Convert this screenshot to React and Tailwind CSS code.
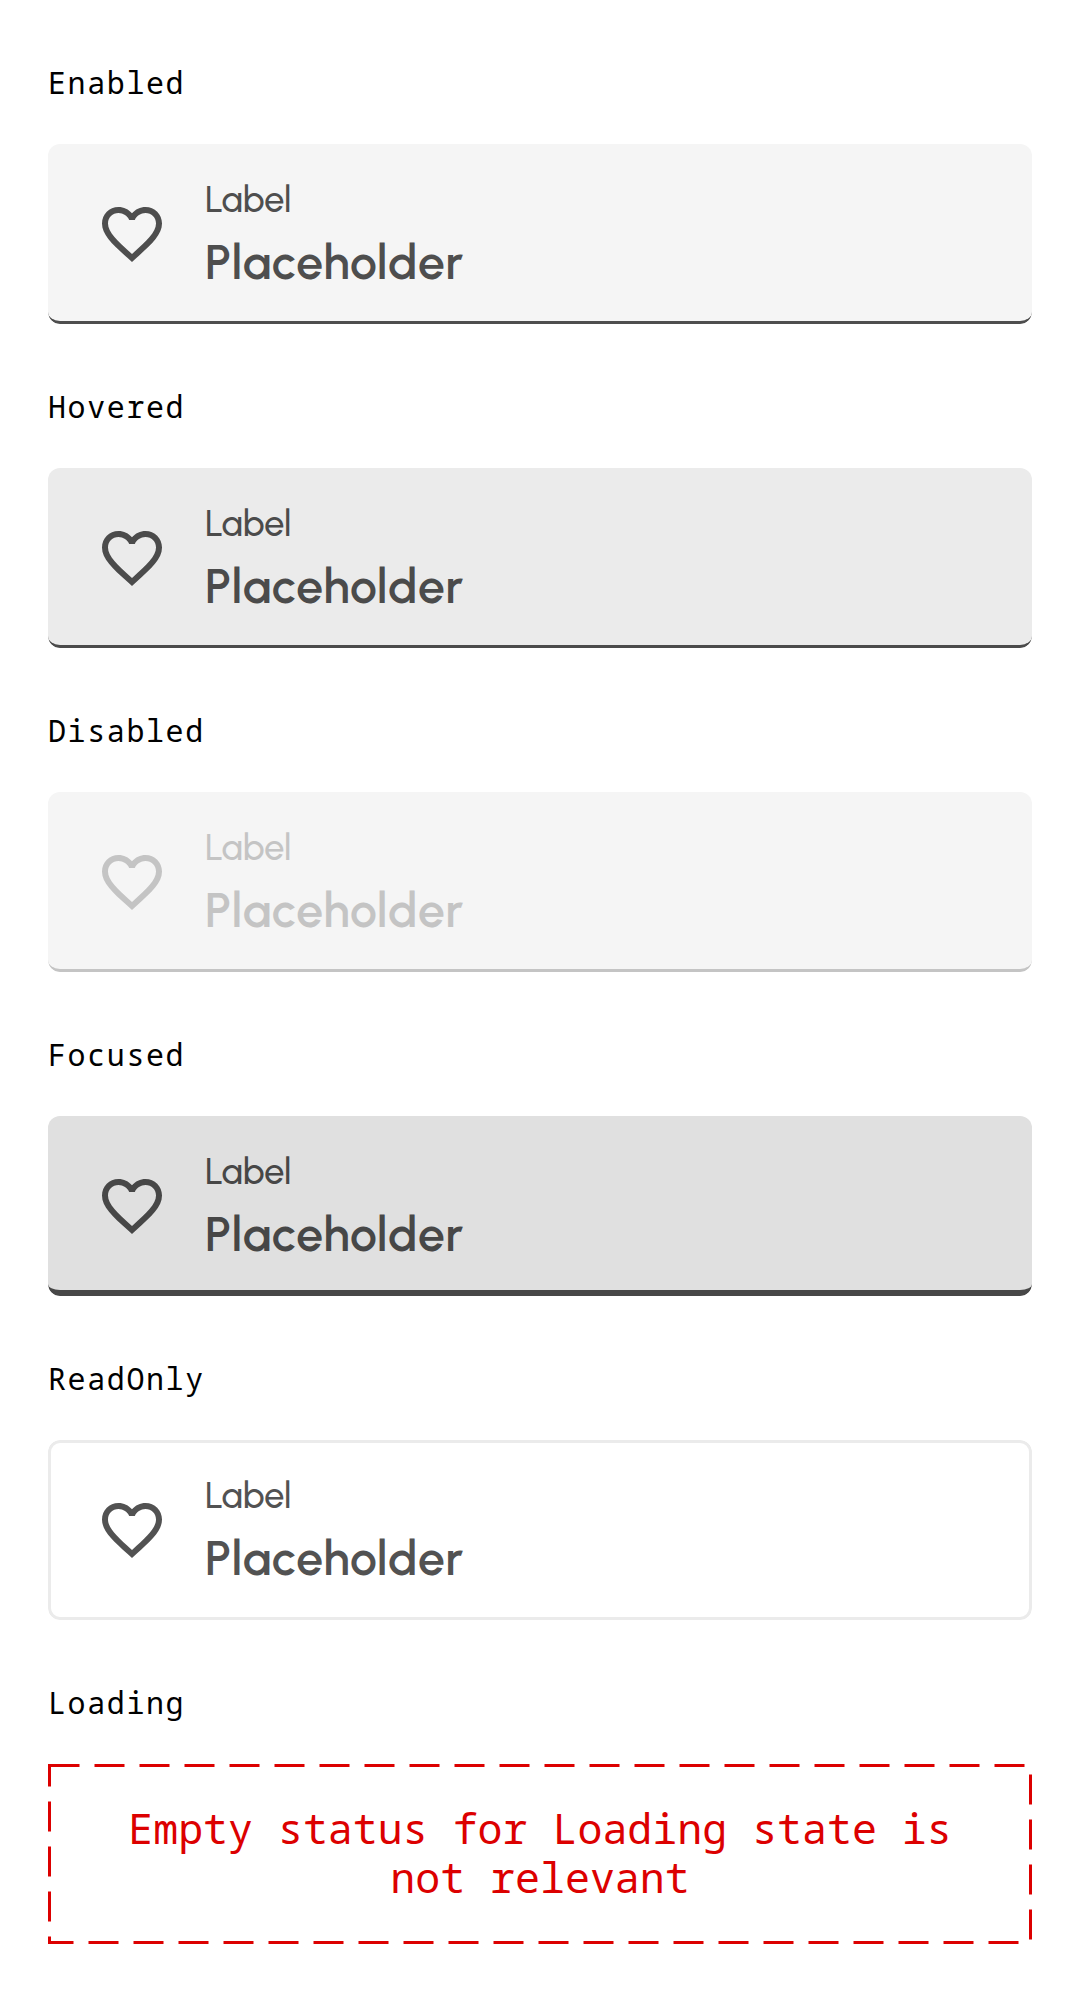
const HEART =
  'M16.5 3c-1.74 0-3.41.81-4.5 2.09C10.91 3.81 9.24 3 7.5 3 4.42 3 2 5.42 2 8.5c0 3.78 3.4 6.86 8.55 11.54L12 21.35l1.45-1.32C18.6 15.36 22 12.28 22 8.5 22 5.42 19.58 3 16.5 3zm-4.4 15.55l-.1.1-.1-.1C7.14 14.24 4 11.39 4 8.5 4 6.5 5.5 5 7.5 5c1.54 0 3.04.99 3.57 2.36h1.87C13.46 5.99 14.96 5 16.5 5c2 0 3.5 1.5 3.5 3.5 0 2.89-3.14 5.74-7.9 10.05z';

const STATES = [
  { title: 'Enabled', box: 'bg-[#f5f5f5]', line: 'border-b-[3px] border-[#4e4e4e]', text: 'text-[#4e4e4e]' },
  { title: 'Hovered', box: 'bg-[#ebebeb]', line: 'border-b-[3px] border-[#4b4b4b]', text: 'text-[#4b4b4b]' },
  { title: 'Disabled', box: 'bg-[#f5f5f5]', line: 'border-b-[3px] border-[#c4c4c4]', text: 'text-[#c4c4c4]' },
  { title: 'Focused', box: 'bg-[#e0e0e0]', line: 'border-b-[6px] border-[#474747]', text: 'text-[#474747]' },
  { title: 'ReadOnly', box: 'bg-white', line: 'border-[3px] border-[#ebebeb]', text: 'text-[#525252]' },
];

function Title({ children }) {
  return (
    <h2 className="mb-[39px] h-[45px] text-[30px] leading-[45px] tracking-[1.6px] text-black">{children}</h2>
  );
}

function Field({ box, line, text }) {
  return (
    <div className={`relative flex h-[180px] items-start overflow-hidden rounded-xl pl-12 ${box} ${text}`}>
      <svg viewBox="0 0 24 24" className="mt-[54px] size-[72px] shrink-0 fill-current">
        <path d={HEART} />
      </svg>
      <div className="ml-[37px] flex flex-col font-[Urbanist,Outfit,Inter,sans-serif]">
        <span className="mt-8 h-12 text-[36px] leading-[48px] font-medium">Label</span>
        <span className="mt-0.5 h-[72px] text-[48px] leading-[72px] font-semibold tracking-[0.8px]">Placeholder</span>
      </div>
      <div className={`pointer-events-none absolute inset-0 rounded-xl ${line}`} />
    </div>
  );
}

export default function App() {
  return (
    <main className="h-[1992px] w-[1080px] overflow-hidden bg-white px-12 pt-[60px] font-['Noto_Sans_Mono','DejaVu_Sans_Mono',monospace]">
      {STATES.map(({ title, ...look }) => (
        <section key={title} className="mb-[60px]">
          <Title>{title}</Title>
          <Field {...look} />
        </section>
      ))}
      <section>
        <Title>Loading</Title>
        <div className="relative flex h-[180px] w-[984px] items-start justify-center px-12 pt-10 text-center text-[41.6px] leading-[49px] text-[#dc0000]">
          <svg className="absolute inset-0 size-full" viewBox="0 0 984 180" fill="none">
            <path d="M1.5 1.5H982.5V178.5H1.5Z" stroke="#dc0000" strokeWidth="3" strokeDasharray="30 15" />
          </svg>
          <p>
            Empty status for Loading state is
            <br />
            not relevant
          </p>
        </div>
      </section>
    </main>
  );
}
